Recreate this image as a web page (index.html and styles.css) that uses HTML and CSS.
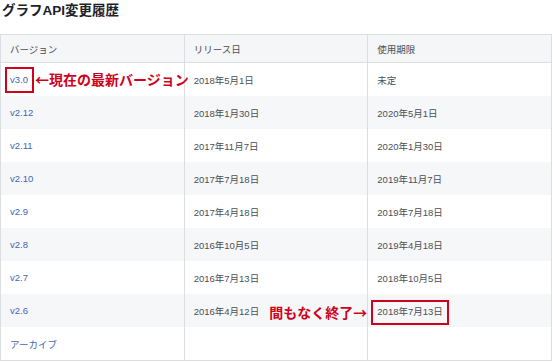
FILE: index.html
```html
<!DOCTYPE html>
<html lang="ja">
<head>
<meta charset="utf-8">
<link rel="stylesheet" href="styles.css">
</head>
<body>
<h2 class="title">グラフAPI変更履歴</h2>
<table class="hist">
  <thead>
    <tr><th>バージョン</th><th>リリース日</th><th>使用期限</th></tr>
  </thead>
  <tbody>
    <tr><td class="anchor"><a href="#">v3.0</a><span class="box box-ver"></span><span class="note note-cur">←現在の最新バージョン</span></td><td>2018年5月1日</td><td>未定</td></tr>
    <tr><td><a href="#">v2.12</a></td><td>2018年1月30日</td><td>2020年5月1日</td></tr>
    <tr><td><a href="#">v2.11</a></td><td>2017年11月7日</td><td>2020年1月30日</td></tr>
    <tr><td><a href="#">v2.10</a></td><td>2017年7月18日</td><td>2019年11月7日</td></tr>
    <tr><td><a href="#">v2.9</a></td><td>2017年4月18日</td><td>2019年7月18日</td></tr>
    <tr><td><a href="#">v2.8</a></td><td>2016年10月5日</td><td>2019年4月18日</td></tr>
    <tr><td><a href="#">v2.7</a></td><td>2016年7月13日</td><td>2018年10月5日</td></tr>
    <tr><td><a href="#">v2.6</a></td><td>2016年4月12日</td><td class="anchor">2018年7月13日<span class="box box-end"></span><span class="note note-end">間もなく終了→</span></td></tr>
    <tr><td><a href="#">アーカイブ</a></td><td></td><td></td></tr>
  </tbody>
</table>
</body>
</html>
```
FILE: styles.css
```css
html, body {
  margin: 0;
  padding: 0;
  background: #fff;
}
body {
  font-family: "Liberation Sans", "Noto Sans CJK JP", sans-serif;
  color: #4b4f56;
}
.title {
  margin: 0;
  padding: 3px 0 0 2px;
  height: 30px;
  box-sizing: border-box;
  font-size: 13.5px;
  line-height: 16px;
  font-weight: bold;
  color: #1d2129;
  font-family: "Liberation Sans", "Noto Sans CJK JP", sans-serif;
}
.hist {
  margin-top: 4px;
  width: 552px;
  border-collapse: collapse;
  table-layout: fixed;
  font-size: 9.5px;
  border: 1px solid #dadde1;
}
.hist th, .hist td {
  text-align: left;
  font-weight: normal;
  padding: 0 9px;
  border-left: 1px solid #dadde1;
  white-space: nowrap;
}
.hist th {
  height: 27px;
  background: #f5f6f7;
  border-bottom: 1px solid #dadde1;
  color: #4b4f56;
}
.hist td {
  height: 33px;
  color: #4b4f56;
}
.hist tbody tr:nth-child(even) td {
  background: #f6f7f9;
}
.hist a {
  color: #4267b2;
  text-decoration: none;
}
.anchor {
  position: relative;
}
.box {
  position: absolute;
  border: 2px solid #d0021b;
  box-sizing: border-box;
}
.box-ver {
  left: 4px;
  top: 4px;
  width: 29px;
  height: 26px;
}
.box-end {
  left: 3px;
  top: 6px;
  width: 78px;
  height: 25px;
}
.note {
  position: absolute;
  color: #d0021b;
  font-weight: bold;
  font-size: 14px;
  line-height: 16px;
  font-family: "Noto Sans CJK JP", sans-serif;
  white-space: nowrap;
}
.note-cur {
  left: 34px;
  top: 8px;
}
.note-end {
  right: 100%;
  top: 10px;
  margin-right: 1px;
}
```
